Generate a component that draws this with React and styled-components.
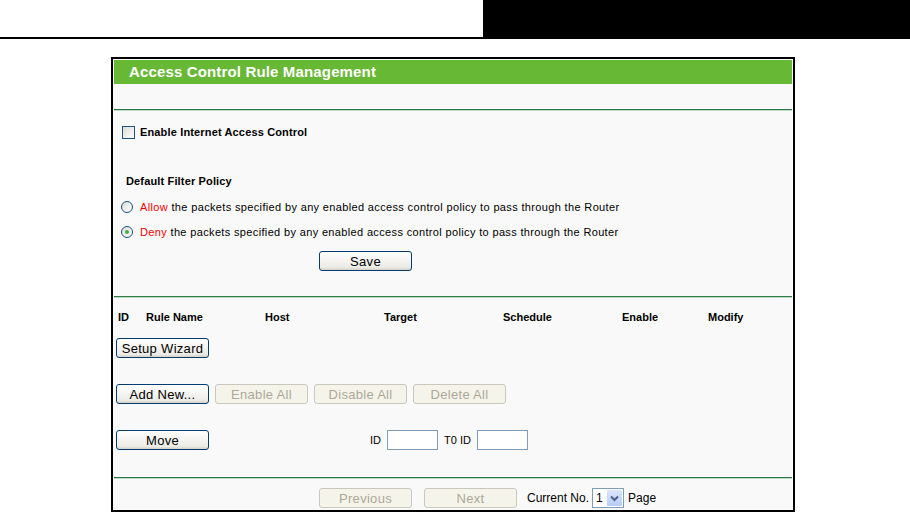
import React from 'react'
import styled, { createGlobalStyle } from 'styled-components'

const Global = createGlobalStyle`
  body {
    margin: 0;
    background: #fff;
    font-family: "Liberation Sans", Arial, sans-serif;
    font-size: 11px;
    color: #000;
  }
`

const TopBar = styled.div`
  display: flex;
  height: 37px;
  border-bottom: 2px solid #000;
  .blank { width: 483px; }
  .ink { flex: 1; background: #000; }
`

const Frame = styled.div`
  box-sizing: border-box;
  width: 684px;
  height: 455px;
  margin: 18px 0 0 111px;
  border: 2px solid #000;
  padding: 1px 1px 0 1px;
  background: #fff;
  overflow: hidden;
`

const Panel = styled.div`
  background: #f9f9f9;
  height: 100%;
`

const TitleBar = styled.div`
  height: 24px;
  background: #67b835;
  color: #fff;
  font-weight: bold;
  font-size: 15px;
  letter-spacing: 0.15px;
  line-height: 24px;
  padding-left: 15px;
`

const Divider = styled.div`
  height: 1px;
  background: #2f7a47;
  border-bottom: 1px solid #bcd9c3;
  margin-top: ${p => p.$top}px;
`

const Row = styled.div`
  display: flex;
  align-items: center;
  height: 20px;
  margin-top: ${p => p.$top}px;
  padding-left: ${p => p.$left || 0}px;
  gap: ${p => p.$gap || 0}px;
`

const Label = styled.span`
  font-weight: ${p => (p.$bold ? 'bold' : 'normal')};
  font-size: ${p => p.$size || 11}px;
  letter-spacing: ${p => (p.$wide ? '0.35px' : p.$bold ? '0.15px' : '0')};
  margin-left: ${p => p.$ml || 0}px;
  color: ${p => (p.$red ? '#f00' : '#000')};
  white-space: nowrap;
`

const Check = styled.span`
  box-sizing: border-box;
  width: 13px;
  height: 13px;
  border: 1px solid #1c5180;
  background: linear-gradient(135deg, #dcdcd6, #fff);
  margin-right: 5px;
`

const Radio = styled.span`
  box-sizing: border-box;
  width: 12px;
  height: 12px;
  border-radius: 50%;
  border: 1px solid #1c5180;
  background: linear-gradient(135deg, #dcdcd6, #fff);
  margin-right: 7px;
  display: flex;
  align-items: center;
  justify-content: center;
  &::after {
    content: '';
    width: 4px;
    height: 4px;
    border-radius: 50%;
    background: ${p => (p.$on ? '#3cb043' : 'transparent')};
  }
`

const Button = styled.button`
  box-sizing: border-box;
  width: 93px;
  height: 20px;
  padding: 0;
  margin-left: ${p => p.$ml || 0}px;
  font-family: "Liberation Sans", Arial, sans-serif;
  font-size: 13px;
  letter-spacing: 0.3px;
  border-radius: 3px;
  border: 1px solid ${p => (p.disabled ? '#cac8bb' : '#003c74')};
  background: ${p => (p.disabled ? '#f5f4ea' : 'linear-gradient(#fff, #ecebe6 85%, #d6d0c5)')};
  color: ${p => (p.disabled ? '#aca899' : '#000')};
`

const Heads = styled.div`
  display: grid;
  grid-template-columns: 28px 119px 119px 119px 119px 86px auto;
  align-items: center;
  height: 20px;
  margin-top: 9px;
  padding-left: 4px;
  font-weight: bold;
`

const Field = styled.input`
  box-sizing: border-box;
  width: 51px;
  height: 20px;
  border: 1px solid #7f9db9;
  background: #fff;
  margin: 0 6px 0 ${p => p.$ml || 0}px;
`

const Select = styled.div`
  box-sizing: border-box;
  display: flex;
  width: 32px;
  height: 20px;
  border: 1px solid #7f9db9;
  background: #fff;
  margin: 0 4px 0 3px;
  font-size: 12px;
  .val { flex: 1; padding-left: 3px; line-height: 18px; }
  .arrow {
    width: 15px;
    margin: 1px;
    background: linear-gradient(#dbe6fd, #b6cbf9);
    border-radius: 1px;
    display: flex;
    align-items: center;
    justify-content: center;
  }
`

const policy = '\u00a0the packets specified by any enabled access control policy to pass through the Router'

export default function App() {
  return (
    <>
      <Global />
      <TopBar>
        <div className="blank" />
        <div className="ink" />
      </TopBar>
      <Frame>
        <Panel>
          <TitleBar>Access Control Rule Management</TitleBar>
          <Divider $top={25} />
          <Row $top={11} $left={8}>
            <Check />
            <Label $bold>Enable Internet Access Control</Label>
          </Row>
          <Row $top={29} $left={12}>
            <Label $bold>Default Filter Policy</Label>
          </Row>
          <Row $top={6} $left={7}>
            <Radio />
            <Label $red $wide>Allow</Label>
            <Label $wide>{policy}</Label>
          </Row>
          <Row $top={5} $left={7}>
            <Radio $on />
            <Label $red $wide>Deny</Label>
            <Label $wide>{policy}</Label>
          </Row>
          <Row $top={9} $left={205}>
            <Button>Save</Button>
          </Row>
          <Divider $top={25} />
          <Heads>
            <span>ID</span>
            <span>Rule Name</span>
            <span>Host</span>
            <span>Target</span>
            <span>Schedule</span>
            <span>Enable</span>
            <span>Modify</span>
          </Heads>
          <Row $top={11} $left={2}>
            <Button>Setup Wizard</Button>
          </Row>
          <Row $top={26} $left={2} $gap={6}>
            <Button>Add New...</Button>
            <Button disabled>Enable All</Button>
            <Button disabled>Disable All</Button>
            <Button disabled>Delete All</Button>
          </Row>
          <Row $top={26} $left={2}>
            <Button>Move</Button>
            <Label $ml={161}>ID</Label>
            <Field $ml={6} />
            <Label>T0 ID</Label>
            <Field $ml={6} />
          </Row>
          <Divider $top={27} />
          <Row $top={9} $left={205}>
            <Button disabled>Previous</Button>
            <Button disabled $ml={12}>Next</Button>
            <Label $ml={10} $size={12}>Current No.</Label>
            <Select>
              <span className="val">1</span>
              <span className="arrow">
                <svg width="9" height="7" viewBox="0 0 9 7">
                  <path d="M1 1.5 L4.5 5 L8 1.5" stroke="#4d6185" strokeWidth="2" fill="none" />
                </svg>
              </span>
            </Select>
            <Label $size={12}>Page</Label>
          </Row>
        </Panel>
      </Frame>
    </>
  )
}
